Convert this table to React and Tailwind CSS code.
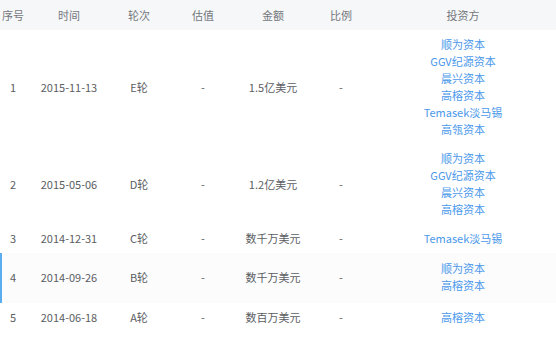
import React from "react";

const rounds = [
  { no: 1, date: "2015-11-13", round: "E轮", value: "-", amount: "1.5亿美元", ratio: "-", investors: ["顺为资本", "GGV纪源资本", "晨兴资本", "高榕资本", "Temasek淡马锡", "高瓴资本"] },
  { no: 2, date: "2015-05-06", round: "D轮", value: "-", amount: "1.2亿美元", ratio: "-", investors: ["顺为资本", "GGV纪源资本", "晨兴资本", "高榕资本"] },
  { no: 3, date: "2014-12-31", round: "C轮", value: "-", amount: "数千万美元", ratio: "-", investors: ["Temasek淡马锡"] },
  { no: 4, date: "2014-09-26", round: "B轮", value: "-", amount: "数千万美元", ratio: "-", investors: ["顺为资本", "高榕资本"], active: true },
  { no: 5, date: "2014-06-18", round: "A轮", value: "-", amount: "数百万美元", ratio: "-", investors: ["高榕资本"] },
];

const cols = "grid grid-cols-[26px_86px_54px_74px_66px_70px_174px]";

const App = () => {
  return (
    <div
      className="w-[556px] h-[340px] bg-white overflow-hidden text-[11px]"
      style={{ fontFamily: '"Noto Sans CJK SC", "Open Sans", sans-serif' }}
    >
      {/* header */}
      <div className={`${cols} h-[30px] items-center bg-[#f6f7f9] text-[#74777c]`}>
        <div className="text-center">序号</div>
        <div className="text-center">时间</div>
        <div className="text-center">轮次</div>
        <div className="text-center">估值</div>
        <div className="text-center">金额</div>
        <div className="text-center">比例</div>
        <div className="text-center">投资方</div>
      </div>

      {rounds.map((r) => (
        <div
          key={r.no}
          className={`${cols} relative items-center text-[#5a5d62] ${r.active ? "bg-[#fcfcfd] pt-[7px] pb-[9px]" : "py-[6px]"}`}
        >
          {r.active && <div className="absolute left-0 top-0 bottom-0 w-[2px] bg-[#5aaef0]" />}
          <div className="text-center">{r.no}</div>
          <div className="text-center">{r.date}</div>
          <div className="text-center">{r.round}</div>
          <div className="text-center">{r.value}</div>
          <div className="text-center">{r.amount}</div>
          <div className="text-center">{r.ratio}</div>
          <div className="flex flex-col items-center text-[#4a98ea]">
            {r.investors.map((name, i) => (
              <span key={i} className="leading-[17px] h-[17px]">{name}</span>
            ))}
          </div>
        </div>
      ))}
    </div>
  );
};

export default App;
